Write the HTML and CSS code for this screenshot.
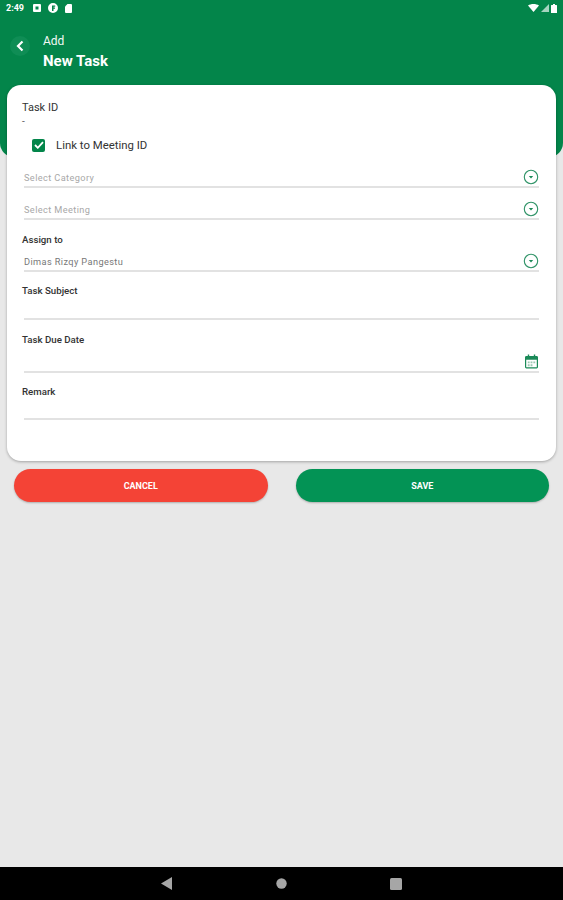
FILE: index.html
```html
<!DOCTYPE html>
<html lang="en">
<head>
    <meta charset="UTF-8">
    <meta name="viewport" content="width=device-width, initial-scale=1.0">
    <title>New Task</title>
    <link rel="stylesheet" href="styles.css">
</head>
<body>
    <div class="screen">
        <header class="header">
            <div class="status-bar">
                <div class="status-left">
                    <span class="time">2:49</span>
                    <svg class="status-icon" width="8" height="8" viewBox="0 0 8 8"><path fill="#fff" fill-rule="evenodd" d="M1 0h6a1 1 0 0 1 1 1v6a1 1 0 0 1-1 1H1a1 1 0 0 1-1-1V1a1 1 0 0 1 1-1zm1.500 2.500v3h3v-3z"/></svg>
                    <svg class="status-icon" width="10" height="10" viewBox="0 0 10 10"><path fill="#fff" fill-rule="evenodd" d="M5 0a5 5 0 1 1 0 10A5 5 0 0 1 5 0zM4 2.500V8h1.500V5.800H7V4.600H5.500V3.700H7.200V2.500z"/></svg>
                    <svg class="status-icon" width="7" height="9" viewBox="0 0 7 9"><path fill="#fff" d="M2.500 0H6a1 1 0 0 1 1 1v7a1 1 0 0 1-1 1H1a1 1 0 0 1-1-1V2.500z"/></svg>
                </div>
                <div class="status-right">
                    <svg width="11" height="8" viewBox="0 0 11 8"><path fill="#fff" d="M0 1.500C3-.5 8-.5 11 1.500L5.500 8z"/></svg>
                    <svg width="8" height="8" viewBox="0 0 8 8"><path fill="#fff" fill-opacity=".65" d="M8 0v8H0z"/></svg>
                    <svg width="6" height="9" viewBox="0 0 6 9"><path fill="#fff" d="M2 0h2v1h1.500a.5.500 0 0 1 .5.500V9H0V1.500A.5.500 0 0 1 .5 1H2z"/></svg>
                </div>
            </div>
            <div class="title-row">
                <button class="back-btn">
                    <svg width="8" height="12" viewBox="0 0 8 12"><path fill="none" stroke="#fff" stroke-width="2.200" d="M6.500 1.500 2 6l4.500 4.500"/></svg>
                </button>
                <div class="titles">
                    <div class="title-small">Add</div>
                    <div class="title-big">New Task</div>
                </div>
            </div>
        </header>

        <main class="card">
            <div class="label label-id">Task ID</div>
            <div class="task-id">-</div>

            <div class="check-row">
                <span class="checkbox">
                    <svg width="10" height="8" viewBox="0 0 10 8"><path fill="none" stroke="#fff" stroke-width="1.800" d="M1 4l2.800 2.800L9 1.200"/></svg>
                </span>
                <span>Link to Meeting ID</span>
            </div>

            <div class="field field-category">
                <span class="placeholder">Select Category</span>
                <svg class="drop-icon" width="16" height="16" viewBox="0 0 16 16"><circle cx="8" cy="8" r="6.700" fill="none" stroke="#2f9367" stroke-width="1.100"/><path fill="#1b8a58" d="M5.800 7h4.400L8 9.500z"/></svg>
            </div>
            <div class="field field-meeting">
                <span class="placeholder">Select Meeting</span>
                <svg class="drop-icon" width="16" height="16" viewBox="0 0 16 16"><circle cx="8" cy="8" r="6.700" fill="none" stroke="#2f9367" stroke-width="1.100"/><path fill="#1b8a58" d="M5.800 7h4.400L8 9.500z"/></svg>
            </div>

            <div class="label label-assign">Assign to</div>
            <div class="field field-assign">
                <span class="value">Dimas Rizqy Pangestu</span>
                <svg class="drop-icon" width="16" height="16" viewBox="0 0 16 16"><circle cx="8" cy="8" r="6.700" fill="none" stroke="#2f9367" stroke-width="1.100"/><path fill="#1b8a58" d="M5.800 7h4.400L8 9.500z"/></svg>
            </div>

            <div class="label label-subject">Task Subject</div>
            <div class="field field-subject"></div>

            <div class="label label-date">Task Due Date</div>
            <div class="field field-date">
                <svg class="date-icon" width="13" height="15" viewBox="0 0 14 15"><path fill="#1b8a58" fill-rule="evenodd" d="M3 0h1.500v1.500h5V0H11v1.500h1.500A1.500 1.500 0 0 1 14 3v10.500a1.500 1.500 0 0 1-1.500 1.500h-11A1.500 1.500 0 0 1 0 13.500V3a1.500 1.500 0 0 1 1.500-1.500H3zM1.300 5.500v8.200h11.400V5.500z"/><path fill="#9cc8b2" d="M3 7.500h2v2H3zm3 0h2v2H6zm3 0h2v2H9zm-6 3h2v2H3zm3 0h2v2H6z"/></svg>
            </div>

            <div class="label label-remark">Remark</div>
            <div class="field field-remark"></div>
        </main>

        <div class="actions">
            <button class="action-btn cancel">CANCEL</button>
            <button class="action-btn save">SAVE</button>
        </div>

        <div class="spacer"></div>

        <nav class="nav-bar">
            <svg width="12" height="13" viewBox="0 0 12 13"><path fill="#a6a6a6" d="M11 0v13L0 6.500z"/></svg>
            <svg width="11" height="11" viewBox="0 0 11 11"><circle cx="5.500" cy="5.500" r="5.200" fill="#a6a6a6"/></svg>
            <svg width="12" height="12" viewBox="0 0 12 12"><rect width="12" height="12" rx="1.500" fill="#a6a6a6"/></svg>
        </nav>
    </div>
</body>
</html>
```

FILE: styles.css
```css
* {
    box-sizing: border-box;
}
body {
    margin: 0;
    font-family: Roboto, "Liberation Sans", sans-serif;
    background-color: #e8e8e8;
}
button {
    font-family: inherit;
    border: none;
    padding: 0;
}
.screen {
    display: flex;
    flex-direction: column;
    height: 900px;
}
.header {
    height: 157px;
    flex: none;
    background-color: #03854a;
    border-radius: 0 0 14px 14px;
    color: #fff;
}
.status-bar {
    display: flex;
    justify-content: space-between;
    align-items: center;
    height: 16px;
    padding: 0 6px;
}
.status-left,
.status-right {
    display: flex;
    align-items: center;
}
.status-left {
    gap: 7px;
}
.status-right {
    gap: 2px;
}
.time {
    font-size: 9px;
    font-weight: 700;
    margin-right: 2px;
}
.title-row {
    display: flex;
    align-items: flex-start;
    padding: 16px 0 0 10px;
}
.back-btn {
    display: flex;
    align-items: center;
    justify-content: center;
    width: 20px;
    height: 20px;
    margin-top: 4px;
    border-radius: 50%;
    background-color: #0f8d55;
}
.titles {
    margin-left: 13px;
}
.title-small {
    font-size: 12px;
    line-height: 19px;
    color: #f2f8f5;
}
.title-big {
    font-size: 15px;
    font-weight: 700;
    line-height: 20px;
}
.card {
    flex: none;
    height: 376px;
    margin: -72px 7px 0;
    padding: 15px 17px 0 15px;
    background-color: #fff;
    border-radius: 14px;
    box-shadow: 0 1px 3px rgba(0, 0, 0, 0.3);
}
.label {
    font-size: 9.700px;
    font-weight: 500;
    line-height: 14px;
    color: #333;
}
.label-id {
    font-size: 11px;
    font-weight: 400;
    line-height: 16px;
}
.task-id {
    font-size: 10px;
    line-height: 12px;
    color: #666;
}
.check-row {
    display: flex;
    align-items: center;
    height: 20px;
    margin: 7px 0 0 10px;
    font-size: 11.400px;
    color: #333;
}
.checkbox {
    display: flex;
    align-items: center;
    justify-content: center;
    width: 13px;
    height: 13px;
    margin-right: 11px;
    background-color: #03854a;
    border-radius: 2px;
}
.field {
    display: flex;
    align-items: center;
    justify-content: space-between;
    margin-left: 2px;
    padding-top: 3px;
    border-bottom: 2px solid #e2e2e2;
}
.placeholder,
.value {
    font-size: 9.200px;
    letter-spacing: 0.400px;
    padding-top: 1px;
}
.placeholder {
    color: #a8a8a8;
}
.value {
    color: #777;
}
.date-icon {
    margin: 1px 1px 0 auto;
}
.field-category {
    height: 24px;
    margin-top: 9px;
}
.field-meeting {
    height: 24px;
    margin-top: 8px;
}
.label-assign {
    margin-top: 13px;
}
.field-assign {
    height: 24px;
    margin-top: 1px;
}
.label-subject {
    margin-top: 12px;
}
.field-subject {
    height: 22px;
}
.label-date {
    margin-top: 13px;
}
.field-date {
    height: 26px;
}
.label-remark {
    margin-top: 12px;
}
.field-remark {
    height: 21px;
}
.actions {
    display: flex;
    gap: 28px;
    flex: none;
    margin: 8px 14px 0;
}
.action-btn {
    flex: 1;
    height: 33px;
    border-radius: 17px;
    color: #fff;
    font-size: 9px;
    font-weight: 700;
    box-shadow: 0 1px 2px rgba(0, 0, 0, 0.25);
}
.cancel {
    background-color: #f44336;
}
.save {
    background-color: #039355;
}
.spacer {
    flex: 1;
}
.nav-bar {
    display: flex;
    align-items: center;
    justify-content: center;
    gap: 103px;
    flex: none;
    height: 33px;
    background-color: #000;
}
```
